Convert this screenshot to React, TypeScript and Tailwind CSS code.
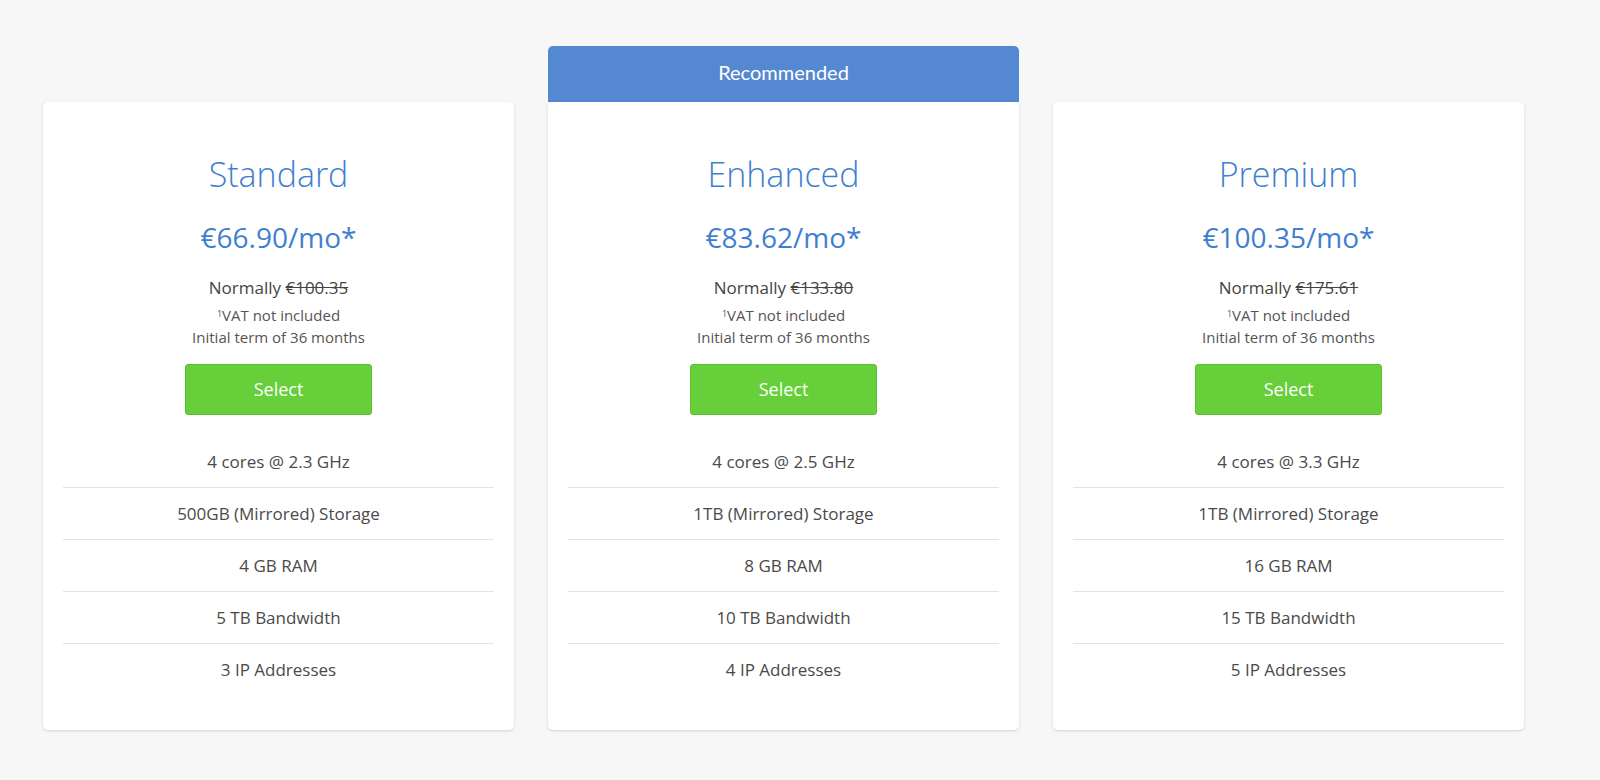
const plans = [
  { name: "Standard", price: "€66.90/mo*", normal: "€100.35", feats: ["4 cores @ 2.3 GHz", "500GB (Mirrored) Storage", "4 GB RAM", "5 TB Bandwidth", "3 IP Addresses"] },
  { name: "Enhanced", price: "€83.62/mo*", normal: "€133.80", rec: true, feats: ["4 cores @ 2.5 GHz", "1TB (Mirrored) Storage", "8 GB RAM", "10 TB Bandwidth", "4 IP Addresses"] },
  { name: "Premium", price: "€100.35/mo*", normal: "€175.61", feats: ["4 cores @ 3.3 GHz", "1TB (Mirrored) Storage", "16 GB RAM", "15 TB Bandwidth", "5 IP Addresses"] },
];

function Card({ p }: { p: (typeof plans)[number] }) {
  return (
    <div className="w-[471px] flex flex-col">
      <div className="h-[56px] flex items-center justify-center">
        {p.rec && (
          <div className="w-full h-full bg-[#5488d0] rounded-t-[5px] text-white text-[20px] flex items-center justify-center pb-[4px]" style={{ fontFamily: "Lato, sans-serif" }}>
            Recommended
          </div>
        )}
      </div>
      <div className="bg-white rounded-[5px] shadow-[0_1px_3px_rgba(0,0,0,0.15)] h-[628px] flex flex-col items-center px-[20px]">
        <div className="mt-[48px] text-[34px] font-light text-[#3f7fd1] leading-[48px]">{p.name}</div>
        <div className="mt-[19px] text-[28px] text-[#3f7fd1] leading-[40px]">{p.price}</div>
        <div className="mt-[19px] text-[17px] text-[#444] leading-[24px]">
          Normally <span className="line-through">{p.normal}</span>
        </div>
        <div className="mt-[4px] text-[15px] text-[#555] leading-[22px]">
          <sup className="text-[9px]">1</sup>VAT not included
        </div>
        <div className="text-[15px] text-[#555] leading-[22px]">Initial term of 36 months</div>
        <button className="mt-[16px] w-[187px] h-[51px] bg-[#66cf3a] border border-[#5cbf32] rounded-[3px] text-white text-[18px]">
          Select
        </button>
        <div className="w-full mt-[21px]">
          {p.feats.map((f, i) => (
            <div key={f} className={"h-[52px] flex items-center justify-center text-[17px] text-[#4a4a4a] " + (i < 4 ? "border-b border-[#e3e3e3]" : "")}>
              {f}
            </div>
          ))}
        </div>
      </div>
    </div>
  );
}

export default function App() {
  return (
    <div className="w-[1600px] h-[780px] bg-[#f7f7f7] pt-[46px] pl-[43px]" style={{ fontFamily: '"Open Sans", sans-serif' }}>
      <div className="flex gap-[34px]">
        {plans.map((p) => <Card key={p.name} p={p} />)}
      </div>
    </div>
  );
}
